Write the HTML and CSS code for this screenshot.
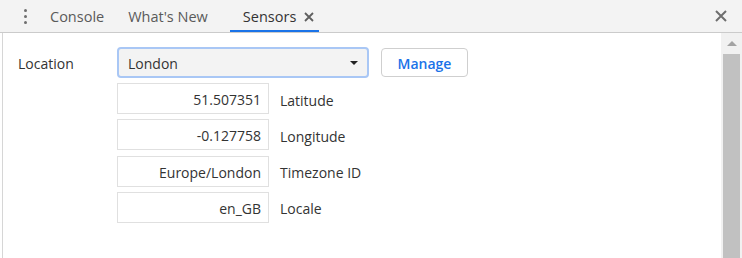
FILE: index.html
```html
<!DOCTYPE html>
<html lang="en">
    <head>
        <meta charset="UTF-8">
        <title>Sensors</title>
        <link rel="stylesheet" href="styles.css">
    </head>
    <body>
        <div class="tabbar">
            <span class="menu-dots">
                <span class="dot"></span>
                <span class="dot"></span>
                <span class="dot"></span>
            </span>
            <span class="tab">Console</span>
            <span class="tab">What's New</span>
            <span class="tab active">Sensors
                <svg class="tab-close" width="10" height="10" viewBox="0 0 10 10">
                    <path d="M1 1 L9 9 M9 1 L1 9" stroke="#5f5f5f" stroke-width="1.8"/>
                </svg>
            </span>
            <span class="spacer"></span>
            <svg class="drawer-close" width="14" height="14" viewBox="0 0 14 14">
                <path d="M2 2 L12 12 M12 2 L2 12" stroke="#6e6e6e" stroke-width="2"/>
            </svg>
        </div>
        <div class="main">
            <div class="panel">
                <div class="row">
                    <span class="label">Location</span>
                    <div class="select">
                        <span>London</span>
                        <span class="caret"></span>
                    </div>
                    <button class="manage">Manage</button>
                </div>
                <div class="fields">
                    <div class="field"><span class="box">51.507351</span><span class="name">Latitude</span></div>
                    <div class="field"><span class="box">-0.127758</span><span class="name">Longitude</span></div>
                    <div class="field"><span class="box">Europe/London</span><span class="name">Timezone ID</span></div>
                    <div class="field"><span class="box">en_GB</span><span class="name">Locale</span></div>
                </div>
            </div>
            <div class="scrollbar">
                <span class="arrow-up"></span>
                <span class="thumb"></span>
            </div>
        </div>
    </body>
</html>
```
FILE: styles.css
```css
* {
    box-sizing: border-box;
    font-family: "Open Sans", "Noto Sans", sans-serif;
}

body {
    margin: 0;
    width: 742px;
    height: 258px;
    overflow: hidden;
    color: #333;
    font-size: 14px;
}

.tabbar {
    height: 33px;
    background: #f3f3f3;
    border-bottom: 1px solid #cbcbcb;
    display: flex;
    align-items: stretch;
    padding-left: 20px;
}

.menu-dots {
    display: flex;
    flex-direction: column;
    justify-content: center;
    gap: 3px;
    width: 10px;
    align-items: center;
}

.dot {
    width: 3px;
    height: 3px;
    border-radius: 50%;
    background: #6e6e6e;
}

.tab {
    display: flex;
    align-items: center;
    padding: 1px 12px 0 12px;
    color: #5a5a5a;
    font-size: 14.5px;
}

.tab:nth-child(2) {
    margin-left: 8px;
}

.tab.active {
    color: #333;
    border-bottom: 2px solid #1a73e8;
    padding: 3px 5px 0 13px;
    margin-left: 10px;
}

.tab-close {
    margin-left: 8px;
}

.spacer {
    flex: 1;
}

.drawer-close {
    align-self: center;
    margin-right: 14px;
}

.main {
    display: flex;
    height: 225px;
}

.panel {
    flex: 1;
    margin-left: 2px;
    border-left: 1px solid #d6d6d6;
    padding: 14px 0 0 15px;
}

.row {
    display: flex;
    align-items: center;
}

.label {
    width: 99px;
    padding-top: 2px;
}

.select {
    width: 252px;
    height: 31px;
    border: 2px solid #a9c7f5;
    border-radius: 4px;
    background: #f3f3f3;
    display: flex;
    align-items: center;
    justify-content: space-between;
    padding: 2px 9px 0 9px;
}

.caret {
    width: 0;
    height: 0;
    border-left: 4px solid transparent;
    border-right: 4px solid transparent;
    border-top: 4px solid #222;
    margin-top: -2px;
}

.manage {
    margin-left: 12px;
    width: 87px;
    height: 29px;
    border: 1px solid #cfcfcf;
    border-radius: 4px;
    background: #fff;
    color: #1a73e8;
    font-weight: 600;
    font-size: 14px;
    padding: 2px 0 0 0;
}

.fields {
    margin-left: 99px;
    margin-top: 5px;
    display: flex;
    flex-direction: column;
    gap: 5.33px;
}

.field {
    display: flex;
    align-items: center;
}

.box {
    width: 152px;
    height: 31px;
    border: 1px solid #e0e0e0;
    text-align: right;
    padding: 2px 7px 0 7px;
    line-height: 27px;
}

.name {
    margin-left: 11px;
    padding-top: 3px;
}

.scrollbar {
    width: 21px;
    background: #f1f1f1;
    display: flex;
    flex-direction: column;
    align-items: center;
}

.arrow-up {
    margin-top: 8px;
    width: 0;
    height: 0;
    border-left: 5px solid transparent;
    border-right: 5px solid transparent;
    border-bottom: 5px solid #a3a3a3;
}

.thumb {
    margin-top: 8px;
    width: 17px;
    flex: 1;
    background: #c1c1c1;
}
```
